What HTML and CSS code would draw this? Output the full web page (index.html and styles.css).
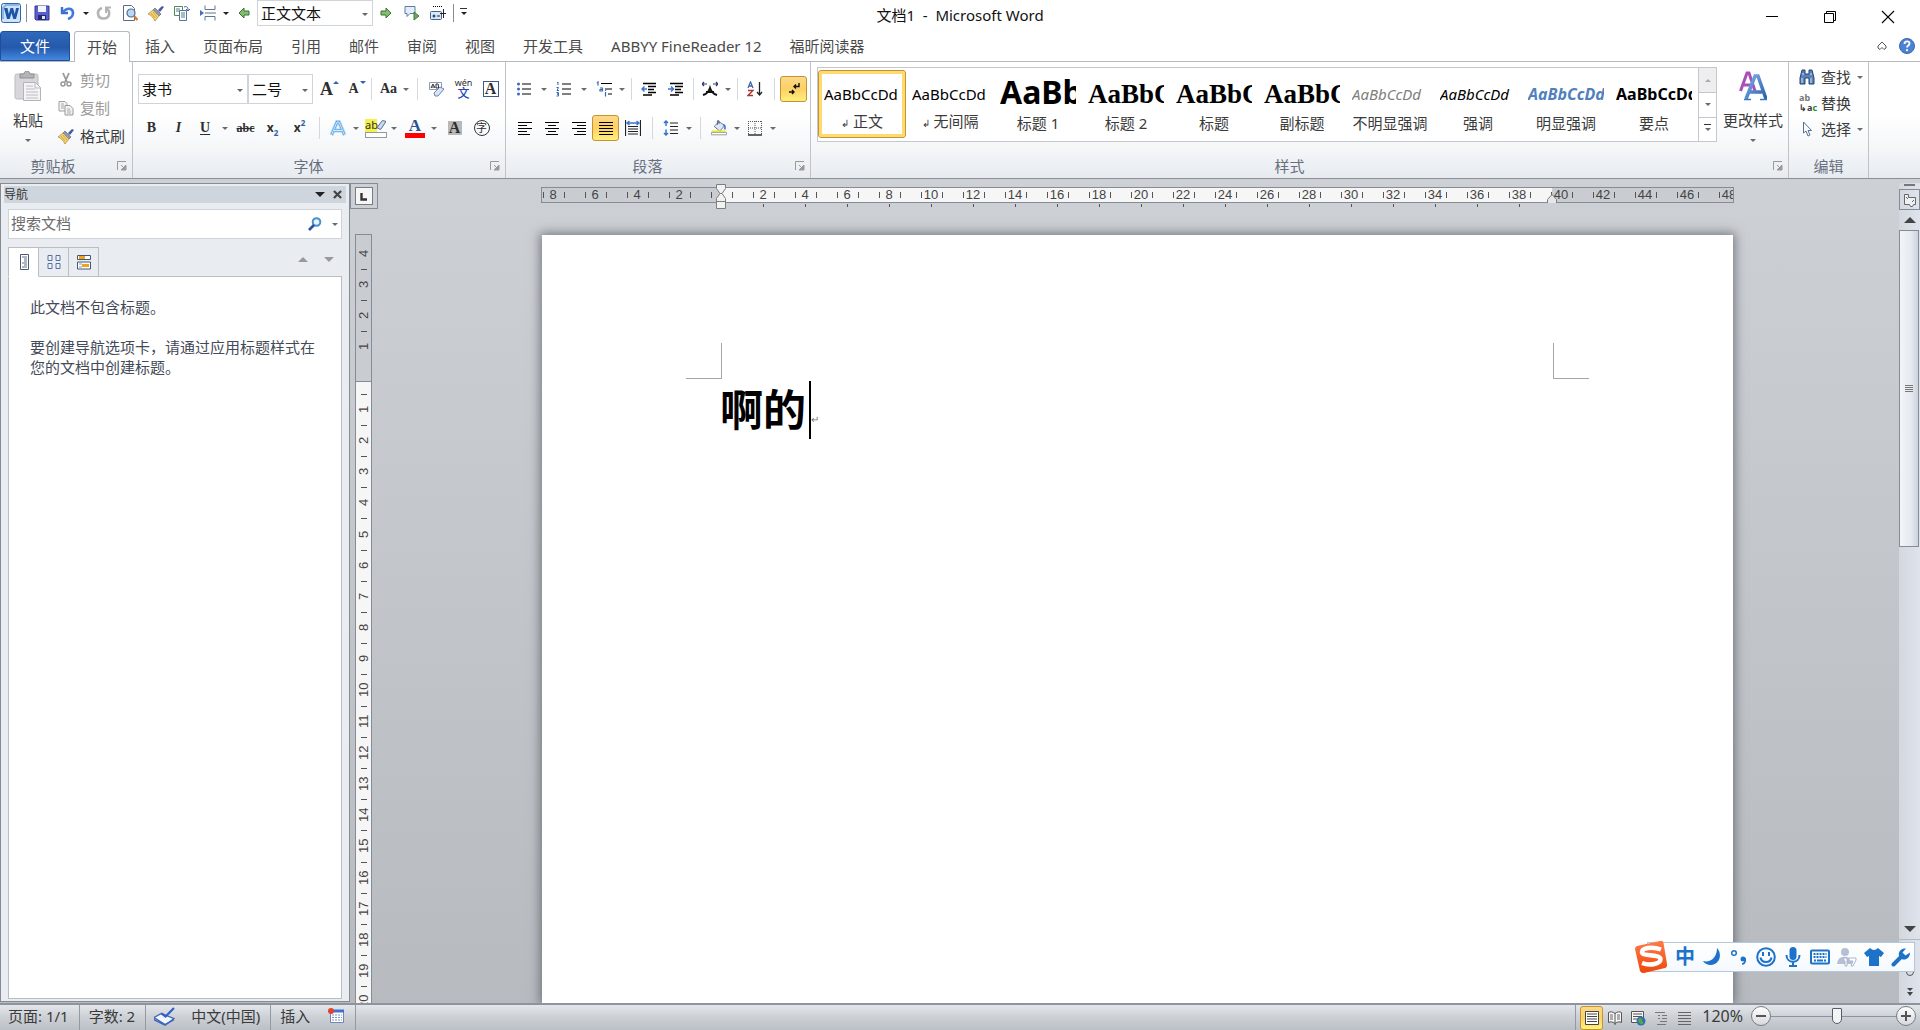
FILE: index.html
```html
<!DOCTYPE html>
<html lang="zh-CN">
<head>
<meta charset="utf-8">
<title>文档1 - Microsoft Word</title>
<link rel="stylesheet" href="styles.css">
</head>
<body>
<svg class="defs" aria-hidden="true">
  <defs>
    <linearGradient id="steel" x1="0" y1="0" x2="1" y2="1"><stop offset="0" stop-color="#7fb0ea"/><stop offset="1" stop-color="#2a5cad"/></linearGradient>
    <linearGradient id="flame" x1="0" y1="0" x2="0" y2="1"><stop offset="0" stop-color="#ff7b4a"/><stop offset="1" stop-color="#f04708"/></linearGradient>
    <symbol id="brush" viewBox="0 0 16 16"><path d="M10 5l4-4 2 1-4 5z" fill="#4a5a9c"/><path d="M7 3l6 6-2 2-6-6z" fill="#8f96b8" stroke="#4e5884" stroke-width=".6"/><path d="M5 5l6 6-4 5C5 12 3 10 0 9z" fill="#f3d46c" stroke="#a8863a" stroke-width=".7"/><path d="M3 8l4 5M5 7l4 5" stroke="#c79e3c" stroke-width=".8"/></symbol>
    <symbol id="pages" viewBox="0 0 16 16"><path d="M1 1.500h6l2 2V11H1z" fill="#f3f3f3" stroke="#a0a0a0"/><path d="M7 5.500h5l3 3V15H7z" fill="#f3f3f3" stroke="#999"/><path d="M3 4h3M3 6h3M3 8h3M9 9h3M9 11h4M9 13h4" stroke="#aaa"/></symbol>
    <symbol id="go" viewBox="0 0 12 12"><path d="M1 4h5V1l5 5-5 5V8H1z" fill="#7fc06a" stroke="#3f6e3a"/></symbol>
    <symbol id="launcher" viewBox="0 0 10 10"><path d="M.5 9V.5H9" fill="none" stroke="#999"/><path d="M4 4l3 3M9 4v5H4z" fill="#999" stroke="#999"/></symbol>
  </defs>
</svg>

<header class="titlebar">
  <div class="quick">
    <svg class="app" viewBox="0 0 20 20"><rect x=".5" y=".5" width="19" height="19" rx="2" fill="#cfe3f8" stroke="#2e67ad"/><path d="M2 16V5l3-3h13" fill="none" stroke="#8ab5e5" stroke-width="2"/><path d="M3 5h3.500l1.300 6L9.500 5h2.600l1.700 6L15 5h3l-3 11h-2.700l-1.800-6-1.800 6H6z" fill="#1c56a8"/></svg>
    <i class="bar"></i>
    <button aria-label="保存"><svg viewBox="0 0 16 16"><path d="M1 1h14v14H2l-1-1z" fill="#5a5fd0" stroke="#34388f"/><path d="M4 1h8v6H4z" fill="#f2f4ff"/><path d="M4 10h8v5H4z" fill="#23276d"/><path d="M8 11h3v3H8z" fill="#dfe5ff"/></svg></button>
    <button aria-label="撤消"><svg viewBox="0 0 16 16"><path d="M2 2v6h6" fill="none" stroke="#3a6fd0" stroke-width="2.400"/><path d="M3 7c4-5 10-4 10 1 0 3-2 5-5 6" fill="none" stroke="#4379d8" stroke-width="2.600"/></svg></button>
    <i class="arrow dark"></i>
    <button aria-label="恢复"><svg viewBox="0 0 16 16"><path d="M6 3c-6 2-5 10.500 1.500 10.500C14 13.500 15 6 10 3.500" fill="none" stroke="#b4b4b4" stroke-width="2.600"/><path d="M10 8V2.500h5" fill="none" stroke="#b4b4b4" stroke-width="2"/></svg></button>
    <button aria-label="打印预览"><svg viewBox="0 0 16 16"><path d="M1.500.5h8l3 3v12h-11z" fill="#fff" stroke="#5c6b86"/><circle cx="9" cy="8" r="4" fill="#b8d8f5" stroke="#4d6d9a" stroke-width="1.200"/><path d="M12 11l3.500 4" stroke="#d07c2c" stroke-width="2.400"/></svg></button>
    <button aria-label="格式刷"><svg><use href="#brush"/></svg></button>
    <button aria-label="复制格式"><svg viewBox="0 0 16 16"><path d="M.5 1.500h8v9h-8z" fill="#fff" stroke="#4c8a58"/><path d="M5.500 5.500h7v10h-7z" fill="#fff" stroke="#5d7393"/><path d="M2 4h4M2 6h3M7 8h4M7 10h4M7 12h4" stroke="#4d7f8c"/><path d="M10 2c3-1 4 0 4 3m-2-1l2 2 2-2" fill="none" stroke="#4664a8"/></svg></button>
    <button aria-label="分页符"><svg viewBox="0 0 16 16"><path d="M5 .5v4h10v-4M5 15.500v-4h10v4" fill="#fff" stroke="#5f7595"/><path d="M5 8h11" stroke="#5f7595"/><path d="M0 5l4 3-4 3z" fill="#3e6fc4"/></svg></button>
    <i class="arrow dark"></i>
    <button aria-label="后退"><svg class="small flip"><use href="#go"/></svg></button>
    <label class="combo style-combo"><select aria-label="样式"><option>正文文本</option></select></label>
    <button aria-label="前进"><svg class="small"><use href="#go"/></svg></button>
    <button aria-label="下一条批注"><svg viewBox="0 0 16 16"><path d="M1 1.500h10v7H6l-3 3v-3H1z" fill="#e5edfb" stroke="#6078ae"/><path d="M10 7l5 4-5 4z" fill="#62ad5a" stroke="#3f7b3a"/></svg></button>
    <button aria-label="插入控件"><svg viewBox="0 0 16 16"><path d="M3 1.500h9" stroke="#000" stroke-dasharray="1 1"/><rect x=".5" y="6.500" width="11" height="8" rx="1" fill="#dce8f7" stroke="#44628c"/><circle cx="4" cy="11" r="1.500" fill="#234a80"/><path d="M7 11h3M10 8.500h6M13.500 4v9" stroke="#222"/></svg></button>
    <i class="bar"></i>
    <button class="more" aria-label="自定义快速访问工具栏"><i class="arrow dark lined"></i></button>
  </div>
  <h1>文档1&nbsp; -&nbsp; Microsoft Word</h1>
  <div class="window">
    <button aria-label="最小化"><svg viewBox="0 0 14 14"><path d="M1 6.500h12" stroke="#000"/></svg></button>
    <button aria-label="还原"><svg viewBox="0 0 14 14"><path d="M1.500 3.500h9v9h-9zM3.500 3V1.500h9v9H11" fill="none" stroke="#000"/></svg></button>
    <button aria-label="关闭"><svg viewBox="0 0 14 14"><path d="M1 1l12 12M13 1L1 13" stroke="#000" stroke-width="1.100"/></svg></button>
  </div>
</header>

<nav class="tabs">
  <button class="file">文件</button>
  <button class="active">开始</button>
  <button>插入</button><button>页面布局</button><button>引用</button><button>邮件</button><button>审阅</button><button>视图</button><button>开发工具</button><button>ABBYY FineReader 12</button><button>福昕阅读器</button>
  <span class="help">
    <button aria-label="功能区最小化"><svg viewBox="0 0 10 10"><path d="M1 5l4-4 4 4v2L7 8.500 5 6.500 3 8.500 1 7z" fill="#fff" stroke="#555"/></svg></button>
    <button aria-label="帮助"><svg class="round" viewBox="0 0 16 16"><circle cx="8" cy="8" r="7.500" fill="#4b82d2" stroke="#3566b5"/><path d="M5.500 6c0-3.500 5-3.500 5-.5 0 2-2.500 2-2.500 4" fill="none" stroke="#fff" stroke-width="1.800"/><circle cx="8" cy="12.200" r="1.100" fill="#fff"/></svg></button>
  </span>
</nav>

<section class="ribbon">
  <div class="group clipboard">
    <div class="body">
      <button class="big"><svg viewBox="0 0 28 30"><rect x="1" y="3" width="23" height="25" rx="2" fill="#d8d6d8" stroke="#bdbbbd"/><path d="M6 3h4c0-4 6-4 6 0h4v4H6z" fill="#b4b4b6" stroke="#909092"/><path d="M9.500 11.500h12l5 5v13h-17z" fill="#f4f4f6" stroke="#b4b4b8"/><path d="M21 12v5h5M12 15h7M12 18h9M12 21h12M12 24h12M12 27h12" stroke="#bcbcc2" fill="none"/></svg><span>粘贴</span><i class="arrow"></i></button>
      <div class="stack">
        <button disabled><svg viewBox="0 0 16 16"><path d="M5 1l4 9M11 1L7 10" stroke="#999" stroke-width="1.800"/><circle cx="5" cy="12" r="2" fill="none" stroke="#999" stroke-width="1.500"/><circle cx="11" cy="12" r="2" fill="none" stroke="#999" stroke-width="1.500"/></svg>剪切</button>
        <button disabled><svg><use href="#pages"/></svg>复制</button>
        <button><svg><use href="#brush"/></svg>格式刷</button>
      </div>
    </div>
    <footer>剪贴板<button class="launch" aria-label="剪贴板选项"><svg><use href="#launcher"/></svg></button></footer>
  </div>

  <div class="group font">
    <div class="body rows">
      <div class="row">
        <label class="combo face"><select aria-label="字体"><option>隶书</option></select></label>
        <label class="combo size"><select aria-label="字号"><option>二号</option></select></label>
        <button class="tool serif s18" aria-label="增大字体">A<i class="corner up"></i></button>
        <button class="tool serif s14" aria-label="缩小字体">A<i class="corner down"></i></button>
        <i class="sep"></i>
        <button class="tool split narrow serif s14" aria-label="更改大小写"><b>Aa</b><i class="arrow"></i></button>
        <i class="sep wide"></i>
        <button class="tool" aria-label="清除格式"><svg viewBox="0 0 16 16"><path d="M.5 1.500h12v7H.5z" fill="#fff" stroke="#8a9bb8"/><path d="M2 7l2-4 2 4M2.500 6h3M7 3v4h2l1-1-1-1 .5-1L9 3z" fill="none" stroke="#333"/><path d="M5 12l6-6 4 2-6 7H6z" fill="#d5e3f7" stroke="#7084b0"/></svg></button>
        <button class="tool wen" aria-label="拼音指南"><span>wén</span><b>文</b></button>
        <button class="tool serif s16" aria-label="字符边框"><span class="framed">A</span></button>
      </div>
      <div class="row">
        <button class="tool serif s14" aria-label="加粗">B</button>
        <button class="tool serif s14 ital" aria-label="倾斜">I</button>
        <button class="tool split serif s14" aria-label="下划线"><b class="under">U</b><i class="arrow"></i></button>
        <button class="tool serif s12 strike" aria-label="删除线">abc</button>
        <button class="tool sans s12" aria-label="下标">x<sub>2</sub></button>
        <button class="tool sans s12" aria-label="上标">x<sup>2</sup></button>
        <i class="sep wide"></i>
        <button class="tool split narrow" aria-label="文本效果"><svg viewBox="0 0 16 16"><path d="M1.500 15L7 2h2l5.500 13M4 10.500h8" fill="none" stroke="#a8d4f5" stroke-width="4"/><path d="M1.500 15L7 2h2l5.500 13M4 10.500h8" fill="none" stroke="#4b9ade" stroke-width="2"/><path d="M1.500 15L7 2h2l5.500 13M4 10.500h8" fill="none" stroke="#fff" stroke-width=".8"/></svg><i class="arrow"></i></button>
        <button class="tool split" aria-label="突出显示"><span class="ink marker"><em>ab</em><svg viewBox="0 0 10 12"><path d="M0 9l6-8 4 1-6 9z" fill="#c9dcf2" stroke="#40608f"/></svg></span><i class="arrow"></i></button>
        <button class="tool split" aria-label="字体颜色"><span class="ink color">A</span><i class="arrow"></i></button>
        <button class="tool serif s16" aria-label="字符底纹"><span class="shaded">A</span></button>
        <button class="tool" aria-label="带圈字符"><span class="circled">字</span></button>
      </div>
    </div>
    <footer>字体<button class="launch" aria-label="字体选项"><svg><use href="#launcher"/></svg></button></footer>
  </div>

  <div class="group para">
    <div class="body rows">
      <div class="row">
        <button class="tool split" aria-label="项目符号"><svg viewBox="0 0 16 16"><path d="M6 3h9M6 8h9M6 13h9" stroke="#000" stroke-width="1.200"/><g fill="#3b68b5"><circle cx="2.500" cy="3" r="1.500"/><circle cx="2.500" cy="8" r="1.500"/><circle cx="2.500" cy="13" r="1.500"/></g></svg><i class="arrow"></i></button>
        <button class="tool split" aria-label="编号"><svg viewBox="0 0 16 16"><path d="M6 3h9M6 8h9M6 13h9" stroke="#000" stroke-width="1.200"/><path d="M1 2l1-1v3M.5 6.500h2l-1.500 3h2M.5 11.500h2v1.500h-1.500 1.500v2H.5" fill="none" stroke="#3b68b5"/></svg><i class="arrow"></i></button>
        <button class="tool split narrow" aria-label="多级列表"><svg viewBox="0 0 16 16"><path d="M5 2.500h11M9 8h7M12 13h4" stroke="#000" stroke-width="1.200"/><path d="M1 2l1-1v3.500M4 7h2.500v3H4V8.500h2M9.500 11v4.500M9.500 9v1" fill="none" stroke="#3b68b5" stroke-width="1.200"/></svg><i class="arrow"></i></button>
        <i class="sep"></i>
        <button class="tool" aria-label="减少缩进"><svg viewBox="0 0 16 16"><path d="M2 2.500h13M7 5.500h8M7 8.500h6M7 11.500h8M2 14h9" stroke="#000" stroke-width="1.500"/><path d="M6 8H1m2.500-2.500L1 8l2.500 2.500" fill="none" stroke="#3b74d0" stroke-width="1.500"/></svg></button>
        <button class="tool" aria-label="增加缩进"><svg viewBox="0 0 16 16"><path d="M2 2.500h13M7 5.500h8M7 8.500h6M7 11.500h8M2 14h9" stroke="#000" stroke-width="1.500"/><path d="M0 8h5M3 5.500L5.500 8 3 10.500" fill="none" stroke="#3b74d0" stroke-width="1.500"/></svg></button>
        <i class="sep"></i>
        <button class="tool split narrow" aria-label="中文版式"><svg viewBox="0 0 16 16"><path d="M1 14c4-1 6-4 7-7 1 3 3 6 7 7M4 11h8" fill="none" stroke="#111" stroke-width="2"/><path d="M0 3h5M2 1L0 3l2 2M11 3h5M14 1l2 2-2 2" fill="none" stroke="#22307e" stroke-width="1.200"/></svg><i class="arrow"></i></button>
        <i class="sep"></i>
        <button class="tool" aria-label="排序"><svg viewBox="0 0 16 16"><path d="M1 7l2.500-6L6 7M2 5h3" fill="none" stroke="#3b68b5" stroke-width="1.300"/><path d="M1 9.500h5l-5 5h5" fill="none" stroke="#a33" stroke-width="1.300"/><path d="M12.500 1v12M10 11l2.500 3 2.500-3" fill="none" stroke="#222" stroke-width="1.300"/></svg></button>
        <i class="sep wide"></i>
        <button class="tool on" aria-label="显示编辑标记"><svg viewBox="0 0 16 16"><path d="M13 2v3.500H8m2-2l-2 2 2 2M3 11h5M6 9l2 2-2 2" fill="none" stroke="#111" stroke-width="1.400"/></svg></button>
      </div>
      <div class="row">
        <button class="tool" aria-label="左对齐"><svg viewBox="0 0 16 16"><path d="M1 2.500h14M1 5.500h9M1 8.500h14M1 11.500h9M1 14.500h12" stroke="#000" stroke-width="1.200"/></svg></button>
        <button class="tool" aria-label="居中"><svg viewBox="0 0 16 16"><path d="M1 2.500h14M4 5.500h8M1 8.500h14M4 11.500h8M2 14.500h12" stroke="#000" stroke-width="1.200"/></svg></button>
        <button class="tool" aria-label="右对齐"><svg viewBox="0 0 16 16"><path d="M1 2.500h14M6 5.500h9M1 8.500h14M6 11.500h9M3 14.500h12" stroke="#000" stroke-width="1.200"/></svg></button>
        <button class="tool on" aria-label="两端对齐"><svg viewBox="0 0 16 16"><path d="M1 2.500h14M1 5.500h14M1 8.500h14M1 11.500h14M1 14.500h14" stroke="#000" stroke-width="1.200"/></svg></button>
        <button class="tool" aria-label="分散对齐"><svg viewBox="0 0 16 16"><path d="M.5 0v16M15.500 0v16M3 6.500h10M3 9h10M3 11.500h10M3 14h10" stroke="#222" stroke-width="1.200"/><path d="M2 3h12M4.500 1L2 3l2.500 2M11.500 1L14 3l-2.500 2" fill="none" stroke="#3b74d0" stroke-width="1.400"/></svg></button>
        <i class="sep wide"></i>
        <button class="tool split narrow" aria-label="行距"><svg viewBox="0 0 16 16"><path d="M7 3h8M7 6.500h8M7 10h8M7 13.500h8" stroke="#222" stroke-width="1.200"/><path d="M3 1v5M1 3l2-2 2 2M3 9.500V15M1 13l2 2 2-2" fill="none" stroke="#3b74d0" stroke-width="1.500"/></svg><i class="arrow"></i></button>
        <i class="sep wide"></i>
        <button class="tool split narrow" aria-label="底纹"><svg class="tall" viewBox="0 0 20 18"><path d="M4 7l6-6 7 5-6 7z" fill="#dce8f8" stroke="#50617e"/><path d="M15 5c3 0 3 3 2 6" fill="none" stroke="#3b74d0" stroke-width="2"/><path d="M8 5V0h2v4" fill="none" stroke="#445"/><path d="M1 13h17" stroke="#f3ee28" stroke-width="2"/><path d="M.5 14.500h19v3H.5z" fill="#fff" stroke="#888"/></svg><i class="arrow"></i></button>
        <button class="tool split narrow" aria-label="边框"><svg viewBox="0 0 16 16"><path d="M1.500 1v13M8 1v13M14.500 1v13M1 1.500h14M1 8h14" stroke="#555" stroke-dasharray="1 1"/><path d="M1 15h14" stroke="#000" stroke-width="1.200"/></svg><i class="arrow"></i></button>
      </div>
    </div>
    <footer>段落<button class="launch" aria-label="段落选项"><svg><use href="#launcher"/></svg></button></footer>
  </div>

  <div class="group styles">
    <div class="body">
      <div class="gallery">
        <button class="style picked"><span class="sample">AaBbCcDd</span><span class="name"><small>↲</small> 正文</span></button>
        <button class="style"><span class="sample">AaBbCcDd</span><span class="name"><small>↲</small> 无间隔</span></button>
        <button class="style"><span class="sample h1">AaBb</span><span class="name">标题 1</span></button>
        <button class="style"><span class="sample h2">AaBbC</span><span class="name">标题 2</span></button>
        <button class="style"><span class="sample h2">AaBbC</span><span class="name">标题</span></button>
        <button class="style"><span class="sample h2">AaBbC</span><span class="name">副标题</span></button>
        <button class="style"><span class="sample ital pale">AaBbCcDd</span><span class="name">不明显强调</span></button>
        <button class="style"><span class="sample ital">AaBbCcDd</span><span class="name">强调</span></button>
        <button class="style"><span class="sample ital strong blue">AaBbCcDd</span><span class="name">明显强调</span></button>
        <button class="style"><span class="sample strong">AaBbCcDd</span><span class="name">要点</span></button>
        <div class="scroller">
          <button disabled aria-label="上一行"><i class="arrow upward"></i></button>
          <button aria-label="下一行"><i class="arrow"></i></button>
          <button aria-label="其他"><i class="arrow lined"></i></button>
        </div>
      </div>
      <button class="big wider"><svg viewBox="0 0 28 30"><path d="M1.500 20L8 2h2l6 18M4 14h9" fill="none" stroke="#a94fb5" stroke-width="3"/><path d="M7 28L16 5h3l8 23M10 21h13" fill="none" stroke="url(#steel)" stroke-width="3.500"/><path d="M5 28.500h7M21 28.500h7" stroke="#3b74c8" stroke-width="1.500"/></svg><span>更改样式</span><i class="arrow"></i></button>
    </div>
    <footer>样式<button class="launch" aria-label="样式选项"><svg><use href="#launcher"/></svg></button></footer>
  </div>

  <div class="group edit">
    <div class="body">
      <div class="stack tight">
        <button><svg viewBox="0 0 16 16"><path d="M3 1h3v4h4V1h3l2 8v6h-5V9H6v6H1V9z" fill="#5b82bd" stroke="#24426f"/><path d="M3 5h2M11 5h2M3 9v5M12 9v5" stroke="#d5e4f7"/></svg>查找<i class="arrow"></i></button>
        <button><span class="swap"><b>ab</b><b>↳a<u>c</u></b></span>替换</button>
        <button><svg viewBox="0 0 16 16"><path d="M4.500 1v11l2.500-2 2 5 2-1-2-4.500h3.500z" fill="#fff" stroke="#5a6f96"/></svg>选择<i class="arrow"></i></button>
      </div>
    </div>
    <footer>编辑</footer>
  </div>
</section>

<main class="work">
  <aside class="pane">
    <div class="pane-head"><span>导航</span><button aria-label="选项"><i class="arrow dark large"></i></button><button aria-label="关闭窗格"><svg viewBox="0 0 10 10"><path d="M1 1l8 8M9 1L1 9" stroke="#444" stroke-width="2.400"/></svg></button></div>
    <div class="search"><input type="text" placeholder="搜索文档" aria-label="搜索文档"><button aria-label="搜索"><svg viewBox="0 0 14 14"><circle cx="8.500" cy="5" r="3.800" fill="#e8f4fd" stroke="#4592cf" stroke-width="2"/><path d="M6 8l-5 5" stroke="#2e4f9a" stroke-width="2.600"/></svg></button><i class="arrow"></i></div>
    <div class="pane-tabs">
      <button class="chosen" aria-label="标题"><svg viewBox="0 0 16 16"><path d="M4.500.5h8v15h-8z" fill="#fff" stroke="#4a5878"/><path d="M6 3h5M8 5h3M8 7h3M6 9h5M8 11h3M6 13h5" stroke="#5f6c88"/></svg></button>
      <button aria-label="页面"><svg viewBox="0 0 16 16"><path d="M2 1.500h4v5H2zM10 1.500h4v5h-4zM2 9.500h4v5H2zM10 9.500h4v5h-4z" fill="#eef3fb" stroke="#5870a0"/></svg></button>
      <button aria-label="结果"><svg viewBox="0 0 16 16"><path d="M1.500 1.500h13v4h-13zM1.500 8h13v7h-13z" fill="#fff" stroke="#44567a"/><path d="M3 3.500h6M6 11.500h7" stroke="#f0a31c" stroke-width="3"/><path d="M3 10h3M3 13h3" stroke="#8b97b3"/></svg></button>
      <span class="jump"><i class="arrow large upward"></i><i class="arrow large"></i></span>
    </div>
    <div class="pane-body"><p>此文档不包含标题。</p><p>要创建导航选项卡，请通过应用标题样式在您的文档中创建标题。</p></div>
  </aside>

  <div class="vside">
    <button class="tabstop" aria-label="制表符"><svg viewBox="0 0 16 16"><path d="M5.500 5v6.500H11" fill="none" stroke="#333" stroke-width="2.400"/></svg></button>
    <div class="vruler"><div class="outer"><span>4</span><span>3</span><span>2</span><span>1</span></div><div class="inner"><span>1</span><span>2</span><span>3</span><span>4</span><span>5</span><span>6</span><span>7</span><span>8</span><span>9</span><span>10</span><span>11</span><span>12</span><span>13</span><span>14</span><span>15</span><span>16</span><span>17</span><span>18</span><span>19</span><span>20</span></div></div>
  </div>

  <div class="canvas">
    <div class="hruler">
      <div class="scale"><span>8</span><span>6</span><span>4</span><span>2</span><span></span><span>2</span><span>4</span><span>6</span><span>8</span><span>10</span><span>12</span><span>14</span><span>16</span><span>18</span><span>20</span><span>22</span><span>24</span><span>26</span><span>28</span><span>30</span><span>32</span><span>34</span><span>36</span><span>38</span><span>40</span><span>42</span><span>44</span><span>46</span><span>48</span></div>
      <svg class="indent first" viewBox="0 0 10 25"><path d="M.5.5h9v4l-3.500 5h-2L.5 4.500zM.5 24.500v-10L4 9.500h2l3.500 5v10zM.5 17.500h9" fill="#f2f2f2" stroke="#7d7d7d"/></svg>
      <svg class="indent last" viewBox="0 0 10 10"><path d="M.5 9V5.500L5 .5l4.500 5V9" fill="#e6e6e6" stroke="#7d7d7d"/></svg>
    </div>
    <article class="page">
      <div class="crop"><i class="left"></i><i class="right"></i></div>
      <p class="line" contenteditable="true" spellcheck="false">啊的<i class="caret"></i><small>↵</small></p>
    </article>
  </div>

  <div class="vscroll">
    <i class="splitter"></i>
    <button class="rulertoggle" aria-label="标尺"><svg viewBox="0 0 14 14"><path d="M1.500 1.500h4v3h7v7h-2l-1 2h-2l-1-2h-5z" fill="#eef0f3" stroke="#666"/><path d="M3 4l2 2M9 9l2-2" stroke="#666"/></svg></button>
    <button class="step" aria-label="向上"><i class="arrow dark big-arrow upward"></i></button>
    <div class="track"><div class="thumb"><i></i></div></div>
    <button class="step" aria-label="向下"><i class="arrow dark big-arrow"></i></button>
    <div class="browse"><button aria-label="选择浏览对象"><svg viewBox="0 0 10 10"><circle cx="5" cy="5" r="3.500" fill="none" stroke="#555"/></svg></button><button aria-label="下一页"><svg viewBox="0 0 10 10"><path d="M2 1h6L5 4zM2 5h6L5 9z" fill="#444"/></svg></button></div>
  </div>
</main>

<footer class="status">
  <span class="cell">页面: 1/1</span>
  <span class="cell">字数: 2</span>
  <span class="cell lang"><svg class="book" viewBox="0 0 20 18"><path d="M0 10l7-4 12 5-8 6z" fill="#f3f6ff" stroke="#3e66b8" stroke-width="1.200"/><path d="M0 10v2l10 5 9-5" fill="none" stroke="#3e66b8" stroke-width="1.400"/><path d="M7 6l4 3 8-8" fill="none" stroke="#2f60c8" stroke-width="2"/></svg>中文(中国)</span>
  <span class="cell mode">插入<svg viewBox="0 0 16 16"><path d="M2.500 2.500h13v12h-13z" fill="#fff" stroke="#6c86b8"/><path d="M2 3h14" stroke="#3f72d0" stroke-width="3"/><path d="M4 7h10M4 9.500h10M4 12h10" stroke="#7f93bb" stroke-dasharray="2 1"/><circle cx="3" cy="3" r="3" fill="#e0452c"/></svg></span>
  <div class="views">
    <button class="on" aria-label="页面视图"><svg viewBox="0 0 16 16"><path d="M1.500 1.500h13v13h-13z" fill="#fff" stroke="#444"/><path d="M3 4h10M3 6.500h10M3 9h10M3 11.500h10" stroke="#444" stroke-width="1.200"/></svg></button>
    <button aria-label="阅读版式"><svg viewBox="0 0 16 16"><path d="M1.500 2.500c2-1 4-1 6.500 1 2.500-2 4.500-2 6.500-1v10c-2-1-4-1-6.500 1-2.500-2-4.500-2-6.500-1zM8 3v12" fill="#f6f6f6" stroke="#555"/><path d="M3 5h3M3 7h3M3 9h3M10 5h3M10 7h3M10 9h3" stroke="#666"/></svg></button>
    <button aria-label="Web 版式"><svg viewBox="0 0 16 16"><path d="M1.500 1.500h12v11h-12z" fill="#f6f6f6" stroke="#555"/><path d="M3 4h9M3 6.500h9M3 9h5" stroke="#555"/><circle cx="11" cy="11" r="4.500" fill="#2f6fb8"/><path d="M8 10c2-3 4-2 4 0s2 1 1 4c-2 1-4 0-5-4z" fill="#58a548"/></svg></button>
    <button aria-label="大纲视图"><svg viewBox="0 0 16 16"><path d="M2 2.500h10M5 5.500h2M9 5.500h5M5 8.500h2M9 8.500h5M7 11.500h7M4 14.500h9" stroke="#777"/></svg></button>
    <button aria-label="草稿"><svg viewBox="0 0 16 16"><path d="M2 2.500h13M2 5.500h13M2 8.500h13M2 11.500h13M2 14.500h13" stroke="#666"/></svg></button>
  </div>
  <span class="percent">120%</span>
  <button class="zoom" aria-label="缩小"><svg viewBox="0 0 16 16"><path d="M3 8h10" stroke="#555" stroke-width="2"/></svg></button>
  <input class="slider" type="range" min="10" max="230" value="126" aria-label="显示比例">
  <button class="zoom" aria-label="放大"><svg viewBox="0 0 16 16"><path d="M3 8h10M8 3v10" stroke="#555" stroke-width="2"/></svg></button>
</footer>

<div class="ime">
  <svg class="logo" viewBox="0 0 34 34"><path d="M3 6L26 1q3-1 3.500 2L33 24q.5 3-2 4L10 33q-3 .5-4-2L1 9q0-2 2-3z" fill="url(#flame)"/><path d="M27 9.500C18 6 7.500 8 8 12.500c.5 4 18 1.500 18.500 6.500.5 5-10.500 7-18.500 4" fill="none" stroke="#fff" stroke-width="4.500"/></svg>
  <b>中</b>
  <svg viewBox="0 0 20 20"><path d="M15 1c5 5 4 16-6 17-4 0-7-2-8-4 7 2 14-3 14-13z" fill="#1c73c9"/></svg>
  <svg viewBox="0 0 20 20"><circle cx="5" cy="6" r="2.300" fill="none" stroke="#1c73c9" stroke-width="1.500"/><circle cx="14" cy="12" r="2.500" fill="#1c73c9"/><path d="M16 11c1 4-1 6-3 6" fill="none" stroke="#1c73c9" stroke-width="1.600"/></svg>
  <svg viewBox="0 0 20 20"><circle cx="10" cy="10" r="8.800" fill="none" stroke="#1c73c9" stroke-width="2"/><path d="M7 5v4M13 5v4M4.500 10.500c1 6 10 6 11 0" fill="none" stroke="#1c73c9" stroke-width="2"/></svg>
  <svg viewBox="0 0 20 20"><rect x="6.500" y="0" width="7" height="13" rx="3.500" fill="#1c73c9"/><path d="M3.500 8c0 9 13 9 13 0M10 15v4M6 19h8" fill="none" stroke="#1c73c9" stroke-width="2"/></svg>
  <svg viewBox="0 0 20 20"><rect x="1" y="3.500" width="18" height="13" rx="1" fill="none" stroke="#1c73c9" stroke-width="2"/><path d="M3.500 7h13M3.500 10h13" stroke="#1c73c9" stroke-width="2" stroke-dasharray="2 1"/><path d="M4 13.500h2M7 13.500h6M14 13.500h2" stroke="#1c73c9" stroke-width="2"/></svg>
  <svg viewBox="0 0 20 20"><circle cx="8" cy="5" r="4" fill="#b5c0d6"/><path d="M0 17q1-9 10-7l5 2v5z" fill="#b5c0d6"/><path d="M7 11h3v8H8v-5M12 11h7v2l-3 6h-2l2-5h-4z" fill="#fff" stroke="#a9b5ce"/></svg>
  <svg viewBox="0 0 20 20"><path d="M6 1q4 4 8 0l6 5-3 4-2-1v10H5V9l-2 1-3-4z" fill="#1c73c9"/></svg>
  <svg viewBox="0 0 20 20"><path d="M2.500 17.500L11 9" stroke="#1c73c9" stroke-width="4" stroke-linecap="round"/><path d="M15 1.500c-6-1-9 5-6 9s10 2 10-5l-4.500 3-3-3z" fill="#1c73c9"/></svg>
</div>
</body>
</html>
```
FILE: styles.css
```css
* { box-sizing: border-box; }
html, body { height: 100%; }
body {
  margin: 0;
  display: flex;
  flex-direction: column;
  overflow: hidden;
  background: #fff;
  color: #3b3b3b;
  font: 15px/20px "Noto Sans", "Noto Sans CJK SC", sans-serif;
}
.defs { position: absolute; width: 0; height: 0; }
button, select, input { font: inherit; color: inherit; }
button {
  display: flex;
  align-items: center;
  justify-content: center;
  padding: 0;
  border: 0;
  background: none;
  white-space: nowrap;
}
svg { flex: none; width: 16px; height: 16px; }
h1, p { margin: 0; font-weight: 400; }

.arrow {
  flex: none;
  width: 0;
  height: 0;
  border: 3px solid transparent;
  border-top: 3px solid #6b6b6b;
  border-bottom: 0;
}
.arrow.dark { border-top-color: #222; }
.arrow.upward { transform: rotate(180deg); }
.arrow.large { border-width: 5px 5px 0; }
.arrow.big-arrow { border-width: 6px 6px 0; border-top-color: #444; }
.arrow.lined { position: relative; }
.arrow.lined::before { content: ""; position: absolute; left: -4px; top: -7px; width: 7px; height: 1px; background: #333; }

/* title bar */
.titlebar { display: grid; grid-template-columns: 1fr auto 1fr; align-items: start; height: 31px; }
.quick { display: flex; align-items: center; height: 26px; }
.quick button { width: 26px; height: 26px; }
.quick .app { width: 20px; height: 20px; margin: 0 3px 0 1px; }
.quick .bar { width: 1px; height: 18px; background: #8c8c8c; margin: 0 2px; }
.quick > .arrow { margin: 0 2px; }
.quick .small { width: 12px; height: 12px; }
.quick .flip { transform: rotate(180deg); }
.quick .more { width: 16px; }
.titlebar h1 { font-size: 15px; line-height: 30px; color: #111; }
.window { display: flex; justify-content: flex-end; padding: 2px 3px 0 0; }
.window button { width: 58px; height: 30px; }
.window svg { width: 14px; height: 14px; }

.combo { position: relative; display: flex; flex: none; border: 1px solid #cfd3da; background: #fff; }
.combo select { appearance: none; width: 100%; border: 0; padding: 0 16px 0 3px; background: none; color: #111; }
.combo::after {
  content: "";
  position: absolute;
  right: 4px;
  top: 50%;
  border: 3px solid transparent;
  border-top-color: #666;
  border-bottom: 0;
}
.style-combo { width: 116px; height: 26px; }

/* ribbon tabs */
.tabs { display: flex; flex: none; height: 31px; border-bottom: 1px solid #b5b9c0; }
.tabs button { padding: 0 14px; color: #4a4a4a; }
.tabs .file { width: 70px; margin-right: 4px; border-radius: 3px 3px 0 0; color: #fff; background: linear-gradient(#2f69bb, #2459ab 55%, #4388e0); border: 1px solid #1f4f9c; }
.tabs .active { width: 56px; margin: 0 1px -1px 0; padding: 0; background: #fff; border: 1px solid #b5b9c0; border-bottom: 0; border-radius: 3px 3px 0 0; }
.help { display: flex; align-items: center; margin-left: auto; padding-right: 5px; gap: 12px; }
.tabs .help button { padding: 0; }
.help svg { width: 10px; height: 10px; }
.help .round { width: 16px; height: 16px; }

/* ribbon */
.ribbon { display: flex; flex: none; height: 117px; background: linear-gradient(#fff 45%, #f4f6f8 75%, #e7ebf0); border-bottom: 1px solid #8b9097; }
.group { display: flex; flex-direction: column; border-right: 1px solid #c0c4ca; }
.group .body { display: flex; flex: 1; }
.group footer { position: relative; text-align: center; height: 23px; padding-right: 26px; line-height: 22px; color: #68707e; }
.launch { position: absolute; right: 4px; top: 5px; width: 12px; height: 12px; }
.launch svg { width: 10px; height: 10px; }
.clipboard { width: 133px; }
.font { width: 373px; padding-left: 5px; }
.para { width: 305px; padding-left: 5px; }
.styles { flex: 1; max-width: 978px; padding-left: 6px; }
.edit { width: 80px; }
.group.edit footer { padding: 0; }

.big { flex-direction: column; justify-content: flex-start; width: 56px; padding-top: 9px; }
.big svg { width: 28px; height: 30px; margin-bottom: 9px; }
.big .arrow { margin-top: 9px; }
.big.wider { width: 70px; }
.stack { display: flex; flex-direction: column; padding-top: 4px; }
.stack button { justify-content: flex-start; height: 28px; gap: 6px; padding-left: 2px; }
.stack button:disabled { color: #9b9b9b; }
.stack.tight { padding: 2px 0 0 8px; }
.stack.tight button { height: 26px; }

.rows { flex-direction: column; gap: 9px; padding-top: 12px; }
.row { display: flex; align-items: center; height: 30px; }
.face { width: 110px; height: 30px; }
.size { width: 65px; height: 30px; }
.tool { position: relative; flex: none; width: 27px; height: 26px; color: #2e2e2e; }
.tool.split { width: 40px; justify-content: space-between; padding: 0 4px 0 5px; }
.tool.narrow { width: 36px; padding-right: 2px; }
.tool.on, .views .on { border: 1px solid #c59432; border-radius: 3px; background: linear-gradient(#fcd98a, #fdd064 50%, #fff07c); }
.sep { flex: none; width: 8px; height: 22px; background: linear-gradient(#d5d8dd, #d5d8dd) center / 1px 100% no-repeat; }
.sep.wide { width: 12px; }
.serif { font-family: "Liberation Serif", serif; font-weight: 700; }
.sans { font-weight: 700; }
.s18 { font-size: 18px; }
.s16 { font-size: 16px; }
.s14 { font-size: 14px; }
.s12 { font-size: 12px; }
.ital { font-style: italic; }
.under { text-decoration: underline; text-underline-offset: 2px; padding-left: 3px; }
.strike { text-decoration: line-through; }
.tool sub, .tool sup { font-size: 8px; line-height: 8px; color: #2f5faf; }
.tool sub { align-self: flex-end; padding-bottom: 4px; }
.tool sup { align-self: flex-start; padding-top: 4px; }
.corner { position: absolute; right: 1px; top: 5px; border: 3px solid transparent; }
.corner.up { border-bottom-color: #2f5faf; border-top: 0; }
.corner.down { border-top-color: #2f5faf; border-bottom: 0; }
.wen { flex-direction: column; font-size: 9px; line-height: 8px; }
.wen b { font-size: 12px; line-height: 13px; font-weight: 500; color: #2c45b5; }
.framed { width: 16px; border: 1px solid #3b5a86; line-height: 14px; }
.shaded { width: 14px; background: #b9b9b9; line-height: 14px; }
.circled { width: 16px; height: 16px; border: 1px solid #333; border-radius: 50%; font-size: 11px; line-height: 14px; }
.ink { display: flex; flex-direction: column; width: 20px; height: 19px; margin-left: -1px; line-height: 15px; }
.color { border-bottom: 5px solid #f00; align-items: center; font: 700 17px/13px "Liberation Serif", serif; color: #2c4f92; }
.marker { position: relative; flex-direction: row; font-size: 11px; line-height: 12px; }
.marker em { font-style: normal; width: 12px; height: 13px; background: #f6f04a; }
.marker svg { width: 9px; height: 12px; }
.marker::after { content: ""; position: absolute; left: 0; bottom: 0; width: 20px; height: 4px; border: 1px solid #999; background: #fff; }

/* style gallery */
.styles .body { padding-top: 5px; justify-content: space-between; }
.gallery { display: flex; height: 75px; border: 1px solid #c4c8ce; background: #fff; }
.style { flex-direction: column; width: 88px; height: 68px; margin-top: 2px; border: 4px solid transparent; justify-content: flex-end; }
.style.picked { border: 1px solid #c59432; border-radius: 3px; box-shadow: inset 0 0 0 3px #fedb70; padding: 3px; }
.sample { width: 76px; height: 40px; overflow: hidden; text-align: left; color: #000; font-size: 15px; line-height: 40px; }
.sample.h1 { font-size: 32px; font-weight: 700; line-height: 36px; }
.sample.h2 { font: 700 27px/40px "Liberation Serif", serif; }
.sample.strong { font-size: 16px; font-weight: 700; }
.sample.pale { color: #808080; }
.sample.blue { color: #4f81bd; }
.style .name { line-height: 22px; }
.style small { font-size: 10px; }
.scroller { display: grid; grid-template-rows: repeat(3, 1fr); width: 18px; border-left: 1px solid #c4c8ce; }
.scroller button + button { border-top: 1px solid #c4c8ce; }
.scroller button:disabled { background: #eee; }
.scroller button:disabled .arrow { border-top-color: #aaa; }
.styles .big { padding-top: 4px; }
.swap { width: 16px; font-size: 9px; line-height: 10px; text-align: left; }
.swap b { display: block; }
.swap b:first-child { color: #777; }
.swap u { color: #1c8a2c; text-decoration: none; }

/* workspace */
.work { display: flex; flex: 1; min-height: 0; padding-top: 4px; background: linear-gradient(#cdd0d5, #b7babf); }
.pane { display: flex; flex-direction: column; flex: none; width: 350px; margin-bottom: 1px; padding: 2px 3px 2px; border: 1px solid #868c95; background: #e9edf2; }
.pane-head { display: flex; align-items: center; gap: 8px; height: 17px; padding: 0 4px 0 0; background: #cfd5dc; color: #333; font-size: 12px; }
.pane-head span { margin-right: auto; }
.pane-head svg { width: 9px; height: 9px; }
.search { display: flex; align-items: center; height: 30px; margin: 6px 4px 8px; border: 1px solid #cfd3da; background: #fff; padding-right: 3px; }
.search input { flex: 1; min-width: 0; border: 0; outline: 0; padding: 0 2px 3px; background: none; }
.search input::placeholder { color: #6d6d6d; opacity: 1; }
.search svg { width: 14px; height: 14px; }
.search .arrow { margin-left: 10px; }
.pane-tabs { display: flex; height: 30px; margin: 0 4px -1px; }
.pane-tabs button { width: 31px; margin-right: -1px; border: 1px solid #b9bdc4; }
.pane-tabs .chosen { position: relative; background: #fff; border-bottom-color: #fff; }
.jump { display: flex; align-items: center; gap: 16px; margin-left: auto; padding: 0 8px 6px 0; }
.jump .arrow { border-top-color: #999; }
.pane-body { flex: 1; margin: 0 4px; padding: 20px 16px 0 21px; border: 1px solid #b9bdc4; background: #fff; color: #444b58; }
.pane-body p { margin-bottom: 20px; }

.vside { display: flex; flex-direction: column; flex: none; width: 28px; min-height: 0; }
.tabstop { width: 28px; height: 26px; border: 1px solid #868c95; }
.tabstop svg { width: 18px; height: 18px; border: 1px solid #777d86; background: #f6f6f6; }
.vruler { flex: 1; min-height: 0; width: 17px; margin: 25px 0 0 5px; overflow: hidden; border: 1px solid #868c95; border-bottom: 0; background: #f6f6f6; }
.vruler span { display: flex; align-items: center; justify-content: center; height: 31px; writing-mode: vertical-rl; transform: rotate(180deg); background: linear-gradient(#555, #555) 5px 100% / 6px 1px no-repeat; }
.vruler .outer span:first-child { background: none; }
.vruler .inner span:nth-child(5n) { height: 32px; }
.outer { height: 147px; padding-top: 3px; border-bottom: 1px solid #868c95; background: #c9ccd1; }
.inner { padding-top: 12px; }
.vruler, .hruler { color: #444; font: 13px/16px "Liberation Sans Narrow", "Liberation Sans", sans-serif; }

.canvas { display: flex; flex-direction: column; align-items: center; flex: 1; min-width: 0; padding-right: 2px; overflow: hidden; }
.hruler { position: relative; flex: none; width: 1193px; height: 52px; padding-top: 4px; }
.scale { display: flex; height: 16px; overflow: hidden; border: 1px solid #868c95; line-height: 14px; background:
  linear-gradient(90deg, #555 1px, transparent 1px) 1px 4px / 21px 6px repeat-x,
  linear-gradient(90deg, #c9ccd1 180px, #f6f6f6 180px, #f6f6f6 1010px, #c9ccd1 1010px); }
.scale span { flex: none; width: 42px; text-align: center; }
.scale span:first-child { margin-left: -10px; }
.hruler::after { content: ""; display: block; height: 3px; margin: 1px 194px 0 222px; background: linear-gradient(90deg, #555 1px, transparent 1px) 0 0 / 42px 3px repeat-x; }
.indent { position: absolute; width: 10px; }
.indent.first { left: 175px; top: 1px; height: 25px; }
.indent.last { left: 1006px; top: 11px; height: 10px; }
.page { flex: 1; width: 1191px; background: #fff; box-shadow: 0 0 10px 2px rgba(70, 78, 88, .65); padding-top: 108px; }
.crop { display: flex; justify-content: space-between; padding: 0 144px; }
.crop i { width: 36px; height: 36px; border-bottom: 1px solid #a5a5a5; }
.crop .left { border-right: 1px solid #a5a5a5; }
.crop .right { border-left: 1px solid #a5a5a5; }
.line { display: flex; align-items: center; height: 62px; padding: 0 178px; outline: 0; color: #000; font-size: 43px; font-weight: 700; line-height: 62px; }
.caret { width: 2px; height: 58px; margin-left: 3px; background: #000; }
.line small { font-size: 10px; font-weight: 400; line-height: 12px; color: #777; padding-top: 18px; }

.vscroll { display: flex; flex-direction: column; flex: none; width: 21px; background: linear-gradient(90deg, #d3d7de, #dfe3ec); }
.splitter { height: 2px; margin: 1px 5px 3px; background: #777; }
.rulertoggle { height: 21px; border: 1px solid #868c95; flex: none; }
.rulertoggle svg { width: 14px; height: 14px; }
.step { height: 20px; flex: none; }
.track { flex: 1; }
.thumb { display: flex; align-items: center; justify-content: center; width: 20px; height: 46%; border: 1px solid #868c95; background: linear-gradient(90deg, #f2f5f9, #e6eaf1 60%, #cdd3dc); }
.thumb i { width: 8px; height: 7px; background: repeating-linear-gradient(#777 0 1px, transparent 1px 2px); }
.browse { display: flex; flex-direction: column; justify-content: flex-end; gap: 10px; height: 64px; padding: 0 5px 6px; border-top: 1px solid #b5b9c0; }
.browse svg { width: 10px; height: 10px; }

/* status bar */
.status { display: flex; align-items: center; flex: none; height: 27px; border-top: 2px solid #8d949e; background: linear-gradient(#e3e6ea, #ced2d7 45%, #bbc0c6); color: #3a3a3a; }
.cell { display: flex; align-items: center; height: 25px; padding: 0 10px 3px 9px; border-right: 1px solid #949aa3; }
.cell:first-child { padding-left: 8px; }
.lang { gap: 16px; padding-left: 8px; }
.lang .book { width: 21px; height: 19px; }
.mode { gap: 18px; padding-right: 11px; }
.views { display: flex; align-items: center; height: 25px; margin-left: auto; padding-left: 4px; border-left: 1px solid #949aa3; }
.views button { width: 23px; height: 24px; }
.percent { padding: 0 8px 3px 7px; font-size: 16px; }
.zoom { width: 20px; height: 20px; margin-bottom: 3px; border: 1px solid #777d86; border-radius: 50%; background: linear-gradient(#fff, #d5d8dd); }
.status .zoom:last-child { margin-right: 4px; }
.slider { appearance: none; width: 125px; height: 20px; margin: 0 0 3px; background: linear-gradient(#8a93a3, #8a93a3) center / 100% 1px no-repeat; }
.slider::-webkit-slider-thumb { appearance: none; width: 10px; height: 16px; border: 1px solid #555d69; border-radius: 1px 1px 5px 5px; background: #f2f4f6; }

/* floating input-method bar */
.ime { position: fixed; right: 5px; bottom: 58px; display: flex; align-items: center; gap: 7px; height: 30px; padding-right: 3px; border: 1px solid #b3c8dc; background: linear-gradient(#fff, #f5f9fe); color: #1c73c9; }
.ime svg { width: 20px; height: 20px; }
.ime .logo { width: 34px; height: 34px; margin-left: -14px; }
.ime b { width: 20px; font-size: 20px; line-height: 28px; }
```
